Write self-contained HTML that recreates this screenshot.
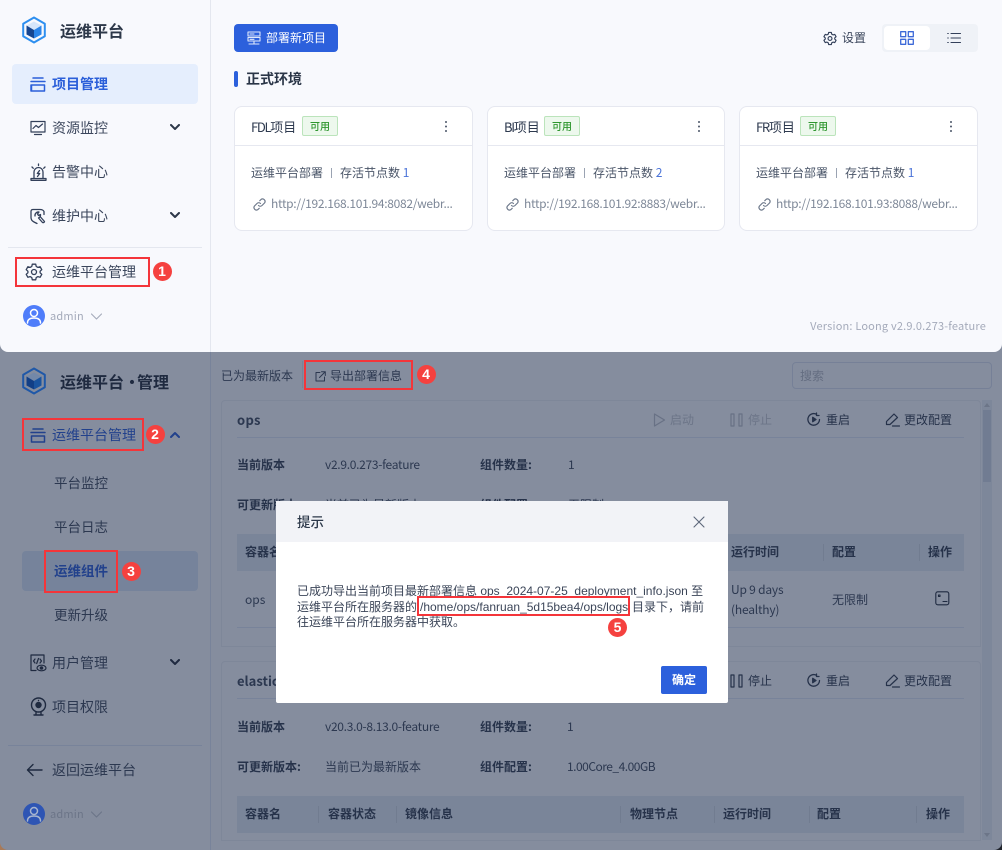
<!DOCTYPE html>
<html><head><meta charset="utf-8"><title>运维平台</title>
<style>
html,body{margin:0;padding:0;width:1002px;height:850px;overflow:hidden}
body{position:relative;background:linear-gradient(to right,#a87a58 50%,#20242c 50%);font-family:"Noto Sans CJK SC","Liberation Sans",sans-serif;font-size:12px;color:#2c3850}
.a,.t,svg{position:absolute}
.t{white-space:nowrap;line-height:20px;height:20px}
.m{font-size:14px}
.d{color:#26324a}
.g{color:#6c7588}
.b{font-weight:700}
.l{letter-spacing:-.3px}
.s{position:absolute;top:806px;width:1px;height:17px;background:#717c90}
.r{position:absolute;border:2px solid #f4353a;box-sizing:border-box;z-index:5}
.n{position:absolute;width:19px;height:19px;border-radius:50%;background:#f5413f;color:#fff;font:700 14px/19px "Liberation Sans",sans-serif;text-align:center;z-index:5}
.card{position:absolute;top:106px;height:125px;box-sizing:border-box;background:#fff;border:1px solid #e6e8f0;border-radius:8px}
.card i{position:absolute;left:0;right:0;top:38px;height:1px;background:#e6e8f0}
.tag{position:absolute;top:116px;width:36px;height:20px;box-sizing:border-box;background:#edf8ed;border:1px solid #bbe4bb;border-radius:2px;color:#2e962e;font-size:10px;font-weight:500;line-height:18px;text-align:center}
svg{fill:none;stroke-linecap:round;stroke-linejoin:round}
</style></head><body>

<div class="a" style="left:0;top:0;width:1002px;height:850px;background:#858d9e;border-radius:0 0 8px 8px"></div>

<!-- top panel -->
<div class="a" style="left:0;top:0;width:1002px;height:352px;background:#f8f9fd;border-radius:0 0 8px 8px"></div>
<div class="a" style="left:210px;top:0;width:1px;height:352px;background:#e4e7ef"></div>

<svg style="left:21px;top:15px" width="28" height="30" viewBox="0 0 28 30"><path d="M13 2.500L23.800 8.800V21.200L13 27.500 2.200 21.200V8.800z" stroke="#2d8ff0" stroke-width="2"/><path d="M13 6.500L20.500 10.500 13 15 5.500 10.500z" fill="#d5e6fb"/><path d="M5.500 10.500L13 15V23.500L5.500 19.500z" fill="#16458f"/><path d="M13 15L20.500 10.500V19.500L13 23.500z" fill="#2a84e8"/></svg>
<div class="t b" style="left:60px;top:20px;font-size:16px;color:#2d3849">运维平台</div>

<div class="a" style="left:12px;top:64px;width:186px;height:40px;background:#e5eefd;border-radius:4px"></div>
<svg style="left:30px;top:77px" width="16" height="15" viewBox="0 0 16 15" stroke="#2b5fd9" stroke-width="1.500"><path d="M3 1h10M1 4.500h14M1.500 8h13v6h-13zM1 8v6"/></svg>
<div class="t m b" style="left:52px;top:74px;color:#2b5fd9">项目管理</div>

<svg style="left:30px;top:120px" width="16" height="16" viewBox="0 0 16 16" stroke="#33405a" stroke-width="1.200"><path d="M1 1.500h14v10.500H1zM3 8.500l3-3 2.500 2 4-3.500M4.500 14.500h7"/></svg>
<div class="t m" style="left:52px;top:118px;color:#3b465c">资源监控</div>
<svg style="left:170px;top:124px" width="10" height="7" viewBox="0 0 10 7" stroke="#2d3849" stroke-width="2"><path d="M1 1l4 4 4-4"/></svg>

<svg style="left:30px;top:163px" width="17" height="18" viewBox="0 0 17 18" stroke="#33405a" stroke-width="1.300"><path d="M4 15V9a4.500 4.500 0 0 1 9 0v6M1 15.500h15v1.800H1zM8.500 1v1.500M2 4l1.300 1.300M15 4l-1.300 1.300M9.500 7.500L7.300 10.500h2.400L7.500 13.500"/></svg>
<div class="t m" style="left:52px;top:162px;color:#3b465c">告警中心</div>

<svg style="left:30px;top:208px" width="16" height="17" viewBox="0 0 16 17" stroke="#33405a" stroke-width="1.300"><path d="M7 1.500H3Q1 1.500 1 3.500v6q0 3 3 4.500l3 1.500M7 1.500h3q3 0 4 2v3M5 8a3.500 3.500 0 0 1 4-4L7.500 6l1 1.500 2-1A3.500 3.500 0 0 1 8.500 10l4 4.500q1.500.5 2-1L10.500 9"/></svg>
<div class="t m" style="left:52px;top:206px;color:#3b465c">维护中心</div>
<svg style="left:170px;top:212px" width="10" height="7" viewBox="0 0 10 7" stroke="#2d3849" stroke-width="2"><path d="M1 1l4 4 4-4"/></svg>

<div class="a" style="left:8px;top:247px;width:194px;height:1px;background:#e4e7ef"></div>
<svg style="left:25px;top:263px" width="18" height="18" viewBox="0 0 18 18" stroke="#33405a" stroke-width="1.300"><path d="M7.300 1.200h3.400l.5 2.200 1.700 1 2.200-.7 1.700 3-1.700 1.500v1.600l1.700 1.500-1.700 3-2.200-.7-1.700 1-.5 2.200H7.300l-.5-2.200-1.700-1-2.200.7-1.700-3 1.700-1.500V8.200L1.200 6.700l1.700-3 2.200.7 1.700-1z"/><circle cx="9" cy="9" r="2.500"/></svg>
<div class="t m" style="left:52px;top:262px;color:#3b465c">运维平台管理</div>
<div class="r" style="left:15px;top:257px;width:135px;height:30px"></div>
<div class="n" style="left:152.500px;top:262px">1</div>

<svg style="left:23px;top:305px" width="22" height="22" viewBox="0 0 22 22"><circle cx="11" cy="11" r="11" fill="#4f7dfa"/><circle cx="11" cy="8" r="3.500" stroke="#fff" stroke-width="1.500"/><path d="M4.500 18q0-5 6.500-5t6.500 5" stroke="#fff" stroke-width="1.500"/></svg>
<div class="t" style="left:50px;top:306px;font-size:11px;color:#a4aaba;letter-spacing:.2px">admin</div>
<svg style="left:91px;top:313px" width="11" height="7" viewBox="0 0 11 7" stroke="#a4aaba" stroke-width="1.100"><path d="M.5 1l5 5 5-5"/></svg>

<div class="a" style="left:234px;top:24px;width:104px;height:28px;background:#2c60dc;border-radius:4px"></div>
<svg style="left:247px;top:31px" width="14" height="14" viewBox="0 0 14 14" stroke="#dfe8fb" stroke-width="1.100"><path d="M1 1h12v4H1zM1 6.500h12v3.500H1zM3 3h4M3 8.300h4M7 10.500V13M2 13h10"/></svg>
<div class="t" style="left:266px;top:28px;color:#fff">部署新项目</div>

<svg style="left:823px;top:31px" width="14" height="15" viewBox="0 0 18 18" stroke="#33405a" stroke-width="1.500"><path d="M7.300 1.200h3.400l.5 2.200 1.700 1 2.200-.7 1.700 3-1.700 1.500v1.600l1.700 1.500-1.700 3-2.200-.7-1.700 1-.5 2.200H7.300l-.5-2.200-1.700-1-2.200.7-1.700-3 1.700-1.500V8.200L1.200 6.700l1.700-3 2.200.7 1.700-1z"/><circle cx="9" cy="9" r="2.500"/></svg>
<div class="t" style="left:842px;top:28px;color:#3b465c">设置</div>
<div class="a" style="left:882px;top:24px;width:96px;height:28px;background:#eff2f7;border-radius:4px"></div>
<div class="a" style="left:884px;top:26px;width:46px;height:24px;background:#fff;border-radius:4px"></div>
<svg style="left:900px;top:31px" width="14" height="14" viewBox="0 0 14 14" stroke="#3c69d8" stroke-width="1.300"><path d="M.7.700h5v5h-5zM8.300.700h5v5h-5zM.7 8.300h5v5h-5zM8.300 8.300h5v5h-5z"/></svg>
<svg style="left:947px;top:32px" width="14" height="12" viewBox="0 0 14 12" stroke="#33405a" stroke-width="1.100"><path d="M4 1.500h9.500M4 6h9.500M4 10.500h9.500M.7 1.500h.6M.7 6h.6M.7 10.500h.6"/></svg>

<div class="a" style="left:234px;top:71px;width:4px;height:16px;background:#2c60dc;border-radius:2px"></div>
<div class="t m b" style="left:246px;top:69px;color:#2a3547">正式环境</div>

<div class="card" style="left:234px;width:239px"><i></i></div>
<div class="card" style="left:487px;width:238px"><i></i></div>
<div class="card" style="left:739px;width:239px"><i></i></div>

<div class="t" style="left:251px;top:117px;font-size:13px;color:#2e3a4f"><span style="letter-spacing:-1.300px">FDL</span>项目</div>
<div class="tag" style="left:302px">可用</div>
<div class="t" style="left:504px;top:117px;font-size:13px;color:#2e3a4f"><span style="letter-spacing:-1.300px">BI</span>项目</div>
<div class="tag" style="left:544px">可用</div>
<div class="t" style="left:756px;top:117px;font-size:13px;color:#2e3a4f"><span style="letter-spacing:-1.300px">FR</span>项目</div>
<div class="tag" style="left:800px">可用</div>
<svg style="left:444px;top:120px" width="4" height="13" viewBox="0 0 4 13"><circle cx="2" cy="2" r="1" fill="#4a5568"/><circle cx="2" cy="6.500" r="1" fill="#4a5568"/><circle cx="2" cy="11" r="1" fill="#4a5568"/></svg>
<svg style="left:697px;top:120px" width="4" height="13" viewBox="0 0 4 13"><circle cx="2" cy="2" r="1" fill="#4a5568"/><circle cx="2" cy="6.500" r="1" fill="#4a5568"/><circle cx="2" cy="11" r="1" fill="#4a5568"/></svg>
<svg style="left:949px;top:120px" width="4" height="13" viewBox="0 0 4 13"><circle cx="2" cy="2" r="1" fill="#4a5568"/><circle cx="2" cy="6.500" r="1" fill="#4a5568"/><circle cx="2" cy="11" r="1" fill="#4a5568"/></svg>

<div class="t" style="left:251px;top:163px;color:#4a5568">运维平台部署</div><div class="a" style="left:331px;top:168px;width:1px;height:10px;background:#9aa3b2"></div><div class="t" style="left:340px;top:163px;color:#4a5568">存活节点数 <span style="color:#4a73d8">1</span></div>
<div class="t" style="left:504px;top:163px;color:#4a5568">运维平台部署</div><div class="a" style="left:584px;top:168px;width:1px;height:10px;background:#9aa3b2"></div><div class="t" style="left:593px;top:163px;color:#4a5568">存活节点数 <span style="color:#4a73d8">2</span></div>
<div class="t" style="left:756px;top:163px;color:#4a5568">运维平台部署</div><div class="a" style="left:836px;top:168px;width:1px;height:10px;background:#9aa3b2"></div><div class="t" style="left:845px;top:163px;color:#4a5568">存活节点数 <span style="color:#4a73d8">1</span></div>

<svg style="left:253px;top:198px" width="13" height="13" viewBox="0 0 13 13" stroke="#6f7a8c" stroke-width="1.200"><path d="M5.500 7.500a2.500 2.500 0 0 0 3.500 0l2.500-2.500A2.500 2.500 0 0 0 8 1.500L6.800 2.700M7.500 5.500a2.500 2.500 0 0 0-3.500 0L1.500 8A2.500 2.500 0 0 0 5 11.500l1.200-1.200"/></svg>
<div class="t l" style="left:271px;top:194px;color:#7e8898">http://192.168.101.94:8082/webr...</div>
<svg style="left:506px;top:198px" width="13" height="13" viewBox="0 0 13 13" stroke="#6f7a8c" stroke-width="1.200"><path d="M5.500 7.500a2.500 2.500 0 0 0 3.500 0l2.500-2.500A2.500 2.500 0 0 0 8 1.500L6.800 2.700M7.500 5.500a2.500 2.500 0 0 0-3.500 0L1.500 8A2.500 2.500 0 0 0 5 11.500l1.200-1.200"/></svg>
<div class="t l" style="left:524px;top:194px;color:#7e8898">http://192.168.101.92:8883/webr...</div>
<svg style="left:758px;top:198px" width="13" height="13" viewBox="0 0 13 13" stroke="#6f7a8c" stroke-width="1.200"><path d="M5.500 7.500a2.500 2.500 0 0 0 3.500 0l2.500-2.500A2.500 2.500 0 0 0 8 1.500L6.800 2.700M7.500 5.500a2.500 2.500 0 0 0-3.500 0L1.500 8A2.500 2.500 0 0 0 5 11.500l1.200-1.200"/></svg>
<div class="t l" style="left:776px;top:194px;color:#7e8898">http://192.168.101.93:8088/webr...</div>

<div class="t" style="right:16px;top:316px;font-size:11px;color:#a4aaba;letter-spacing:.18px">Version: Loong v2.9.0.273-feature</div>

<!-- lower dimmed panel -->
<div class="a" style="left:210px;top:352px;width:1px;height:498px;background:#78839a"></div>
<svg style="left:21px;top:366px" width="28" height="30" viewBox="0 0 28 30"><path d="M13 2.500L23.800 8.800V21.200L13 27.500 2.200 21.200V8.800z" stroke="#1f58a8" stroke-width="2"/><path d="M13 6.500L20.500 10.500 13 15 5.500 10.500z" fill="#7388a8"/><path d="M5.500 10.500L13 15V23.500L5.500 19.500z" fill="#123f86"/><path d="M13 15L20.500 10.500V19.500L13 23.500z" fill="#1a549f"/></svg>
<div class="t b" style="left:60px;top:371px;font-size:16px;color:#1f2a40">运维平台</div>
<div class="t b" style="left:124px;top:371px;font-size:16px;color:#1f2a40">·</div>
<div class="t b" style="left:137px;top:371px;font-size:16px;color:#1f2a40">管理</div>

<svg style="left:30px;top:428px" width="16" height="15" viewBox="0 0 16 15" stroke="#22418c" stroke-width="1.500"><path d="M3 1h10M1 4.500h14M1.500 8h13v6h-13z"/></svg>
<div class="t m" style="left:52px;top:425px;color:#22418c">运维平台管理</div>
<div class="r" style="left:22px;top:418px;width:122px;height:33px"></div>
<div class="n" style="left:145.500px;top:425px">2</div>
<svg style="left:170px;top:431px" width="10" height="7" viewBox="0 0 10 7" stroke="#22418c" stroke-width="2"><path d="M1 6l4-4 4 4"/></svg>

<div class="t m" style="left:54px;top:472px;font-size:13.500px;color:#2c3850">平台监控</div>
<div class="t m" style="left:54px;top:516px;font-size:13.500px;color:#2c3850">平台日志</div>
<div class="a" style="left:22px;top:551px;width:176px;height:40px;background:#76839b;border-radius:4px"></div>
<div class="t m b" style="left:54px;top:560px;font-size:13.500px;color:#22418c">运维组件</div>
<div class="r" style="left:44px;top:550px;width:74px;height:43px"></div>
<div class="n" style="left:121.500px;top:562px">3</div>
<div class="t m" style="left:54px;top:604px;font-size:13.500px;color:#2c3850">更新升级</div>

<svg style="left:30px;top:654px" width="17" height="18" viewBox="0 0 17 18" stroke="#1f2a40" stroke-width="1.200"><path d="M6 16.500H1V1h13v8M5 5L3.500 7 5 9M10 5l1.500 2L10 9M8.500 4.500L6.700 9.500"/><ellipse cx="11.500" cy="14" rx="4.500" ry="2.800"/><circle cx="11.500" cy="14" r="1.200" fill="#1f2a40"/></svg>
<div class="t m" style="left:52px;top:653px;color:#2c3850">用户管理</div>
<svg style="left:170px;top:659px" width="10" height="7" viewBox="0 0 10 7" stroke="#1f2a40" stroke-width="2"><path d="M1 1l4 4 4-4"/></svg>

<svg style="left:30px;top:697px" width="17" height="20" viewBox="0 0 17 20" stroke="#1f2a40" stroke-width="1.400"><circle cx="8.500" cy="8" r="7"/><circle cx="8.500" cy="8" r="2.500" fill="#1f2a40"/><path d="M8.500 3.500h.01M4 18h9M6 15.500V18M11 15.500V18"/></svg>
<div class="t m" style="left:52px;top:697px;color:#2c3850">项目权限</div>

<div class="a" style="left:8px;top:745px;width:194px;height:1px;background:#78839a"></div>
<svg style="left:26px;top:763px" width="17" height="14" viewBox="0 0 17 14" stroke="#1f2a40" stroke-width="1.400"><path d="M16 7H1.500M7 1.500L1.500 7 7 12.500"/></svg>
<div class="t m" style="left:52px;top:760px;color:#2c3850">返回运维平台</div>

<svg style="left:23px;top:803px" width="22" height="22" viewBox="0 0 22 22"><circle cx="11" cy="11" r="11" fill="#2e55b4"/><circle cx="11" cy="8" r="3.500" stroke="#a6b4cf" stroke-width="1.500"/><path d="M4.500 18q0-5 6.500-5t6.500 5" stroke="#a6b4cf" stroke-width="1.500"/></svg>
<div class="t g" style="left:50px;top:804px;font-size:11px;letter-spacing:.2px">admin</div>
<svg style="left:91px;top:811px" width="11" height="7" viewBox="0 0 11 7" stroke="#6c7588" stroke-width="1.100"><path d="M.5 1l5 5 5-5"/></svg>

<div class="t" style="left:221px;top:366px;color:#2c3850">已为最新版本</div>
<div class="a" style="left:302px;top:361px;width:1px;height:27px;background:#78839a"></div>
<svg style="left:315px;top:371px" width="11" height="11" viewBox="0 0 11 11" stroke="#2c3850" stroke-width="1"><path d="M5 1.500H1v8.500h8.500V6M4.500 6.500L10 1M6.500.7H10.300V4.500"/></svg>
<div class="t" style="left:330px;top:366px;color:#2c3850">导出部署信息</div>
<div class="r" style="left:304px;top:360px;width:109px;height:30px"></div>
<div class="n" style="left:416.500px;top:365px">4</div>
<div class="a" style="left:792px;top:362px;width:200px;height:27px;box-sizing:border-box;border:1px solid #768097;border-radius:4px"></div>
<div class="t" style="left:800px;top:366px;color:#646d81">搜索</div>

<!-- card 1 -->
<div class="a" style="left:221px;top:400px;width:760px;height:247px;box-sizing:border-box;border:1px solid #7e8799;border-radius:4px 4px 0 0"></div>
<div class="t b" style="left:237px;top:410px;font-size:13px;letter-spacing:.3px;color:#2c3850">ops</div>
<div class="a" style="left:237px;top:437px;width:727px;height:1px;background:#78839a"></div>
<svg style="left:653px;top:413px" width="13" height="14" viewBox="0 0 13 14" stroke="#687185" stroke-width="1.200"><path d="M1.500 1v12L11.500 7z"/></svg>
<div class="t g" style="left:670px;top:410px">启动</div>
<svg style="left:730px;top:413px" width="13" height="14" viewBox="0 0 13 14" stroke="#687185" stroke-width="1.200"><path d="M1 1h3v12H1zM9 1h3v12H9z"/></svg>
<div class="t g" style="left:748px;top:410px">停止</div>
<svg style="left:807px;top:412px" width="14" height="15" viewBox="0 0 14 15" stroke="#26324a" stroke-width="1.300"><path d="M12.500 7.500a5.800 5.800 0 1 1-3-5.200M9.500 1v2.500H12"/><path d="M5.700 5.300v4.400L9 7.500z" fill="#26324a"/></svg>
<div class="t d" style="left:826px;top:410px">重启</div>
<svg style="left:885px;top:412px" width="15" height="15" viewBox="0 0 15 15" stroke="#26324a" stroke-width="1.200"><path d="M1.500 12.500V9.500L9 2l3.500 3.500L5 12.500zM7.500 14h7"/></svg>
<div class="t d" style="left:904px;top:410px">更改配置</div>

<div class="t b" style="left:237px;top:455px;color:#26324a">当前版本</div>
<div class="t l" style="left:325px;top:455px;color:#2c3850">v2.9.0.273-feature</div>
<div class="t b" style="left:480px;top:455px;color:#26324a">组件数量:</div>
<div class="t" style="left:568px;top:455px;color:#2c3850">1</div>
<div class="t b" style="left:237px;top:495px;color:#26324a">可更新版本:</div>
<div class="t" style="left:325px;top:495px;color:#2c3850">当前已为最新版本</div>
<div class="t b" style="left:480px;top:495px;color:#26324a">组件配置:</div>
<div class="t" style="left:568px;top:495px;color:#2c3850">无限制</div>

<div class="a" style="left:237px;top:534px;width:727px;height:37px;background:#7a8599"></div>
<div class="t b" style="left:245px;top:542px;color:#26324a">容器名</div>
<div class="t b" style="left:731px;top:542px;color:#26324a">运行时间</div>
<div class="t b" style="left:832px;top:542px;color:#26324a">配置</div>
<div class="t b" style="left:928px;top:542px;color:#26324a">操作</div>
<div class="a" style="left:823px;top:544px;width:1px;height:17px;background:#717c90"></div>
<div class="a" style="left:919px;top:544px;width:1px;height:17px;background:#717c90"></div>
<div class="t" style="left:245px;top:590px;color:#2c3850">ops</div>
<div class="t" style="left:731px;top:580px;color:#2c3850;letter-spacing:-.2px">Up 9 days</div>
<div class="t" style="left:731px;top:600px;color:#2c3850;letter-spacing:-.2px">(healthy)</div>
<div class="t" style="left:832px;top:590px;color:#2c3850">无限制</div>
<svg style="left:935px;top:591px" width="15" height="15" viewBox="0 0 15 15" stroke="#1f2a40" stroke-width="1.100"><rect x=".8" y=".8" width="13" height="13" rx="2"/><path d="M8 10.500h4M3.500 4h1.500v1.500h-1.500z"/></svg>
<div class="a" style="left:237px;top:627px;width:727px;height:1px;background:#78839a"></div>

<!-- card 2 -->
<div class="a" style="left:221px;top:661px;width:760px;height:180px;box-sizing:border-box;border:1px solid #7e8799;border-top-left-radius:4px;border-top-right-radius:4px"></div>
<div class="t b" style="left:237px;top:671px;font-size:13px;color:#2c3850">elastic</div>
<svg style="left:730px;top:674px" width="13" height="14" viewBox="0 0 13 14" stroke="#26324a" stroke-width="1.200"><path d="M1 1h3v12H1zM9 1h3v12H9z"/></svg>
<div class="t d" style="left:748px;top:671px">停止</div>
<svg style="left:807px;top:673px" width="14" height="15" viewBox="0 0 14 15" stroke="#26324a" stroke-width="1.300"><path d="M12.500 7.500a5.800 5.800 0 1 1-3-5.200M9.500 1v2.500H12"/><path d="M5.700 5.300v4.400L9 7.500z" fill="#26324a"/></svg>
<div class="t d" style="left:826px;top:671px">重启</div>
<svg style="left:885px;top:673px" width="15" height="15" viewBox="0 0 15 15" stroke="#26324a" stroke-width="1.200"><path d="M1.500 12.500V9.500L9 2l3.500 3.500L5 12.500zM7.500 14h7"/></svg>
<div class="t d" style="left:904px;top:671px">更改配置</div>
<div class="a" style="left:237px;top:698px;width:727px;height:1px;background:#78839a"></div>

<div class="t b" style="left:237px;top:717px;color:#26324a">当前版本</div>
<div class="t l" style="left:325px;top:717px;color:#2c3850">v20.3.0-8.13.0-feature</div>
<div class="t b" style="left:480px;top:717px;color:#26324a">组件数量:</div>
<div class="t" style="left:567px;top:717px;color:#2c3850">1</div>
<div class="t b" style="left:237px;top:757px;color:#26324a">可更新版本:</div>
<div class="t" style="left:325px;top:757px;color:#2c3850">当前已为最新版本</div>
<div class="t b" style="left:480px;top:757px;color:#26324a">组件配置:</div>
<div class="t" style="left:567px;top:757px;color:#2c3850;letter-spacing:-.5px">1.00Core_4.00GB</div>

<div class="a" style="left:237px;top:796px;width:727px;height:37px;background:#7a8599"></div>
<div class="t b" style="left:245px;top:804px;color:#26324a">容器名</div>
<div class="t b" style="left:328px;top:804px;color:#26324a">容器状态</div>
<div class="t b" style="left:405px;top:804px;color:#26324a">镜像信息</div>
<div class="t b" style="left:630px;top:804px;color:#26324a">物理节点</div>
<div class="t b" style="left:723px;top:804px;color:#26324a">运行时间</div>
<div class="t b" style="left:817px;top:804px;color:#26324a">配置</div>
<div class="t b" style="left:926px;top:804px;color:#26324a">操作</div>
<div class="s" style="left:318px"></div>
<div class="s" style="left:396px"></div>
<div class="s" style="left:620px"></div>
<div class="s" style="left:714px"></div>
<div class="s" style="left:809px"></div>
<div class="s" style="left:916px"></div>

<!-- scrollbar -->
<div class="a" style="left:982px;top:400px;width:10px;height:440px;background:#7d879a"></div>
<div class="a" style="left:983px;top:410px;width:8px;height:72px;background:#717c92"></div>
<svg style="left:984px;top:403px" width="6" height="4" viewBox="0 0 6 4"><path d="M0 4L3 0l3 4z" fill="#6c7588"/></svg>
<svg style="left:984px;top:833px" width="6" height="4" viewBox="0 0 6 4"><path d="M0 0L3 4l3-4z" fill="#6c7588"/></svg>

<!-- modal -->
<div class="a" style="left:276px;top:501px;width:452px;height:202px;background:#fff;border-radius:2px;z-index:3"></div>
<div class="a" style="left:276px;top:501px;width:452px;height:41px;background:#f2f3f7;z-index:3"></div>
<div class="t m" style="left:297px;top:511px;font-size:13.500px;font-weight:500;color:#2c3849;z-index:4">提示</div>
<svg style="left:693px;top:516px;z-index:4" width="12" height="12" viewBox="0 0 12 12" stroke="#5c6679" stroke-width="1.100"><path d="M1 1l10 10M11 1L1 11"/></svg>
<div class="t" style="left:297px;top:581px;font-family:'Liberation Sans','Noto Sans CJK SC',sans-serif;font-size:12px;color:#3b4558;z-index:4">已成功导出当前项目最新部署信息 ops_2024-07-25_deployment_info.json 至</div>
<div class="t" style="left:297px;top:597px;font-family:'Liberation Sans','Noto Sans CJK SC',sans-serif;font-size:12px;color:#3b4558;z-index:4">运维平台所在服务器的</div>
<div class="t" style="left:420px;top:597px;font-family:'Liberation Sans','Noto Sans CJK SC',sans-serif;font-size:12px;color:#3b4558;z-index:4">/home/ops/fanruan_5d15bea4/ops/logs</div>
<div class="t" style="left:632px;top:597px;font-family:'Liberation Sans','Noto Sans CJK SC',sans-serif;font-size:12px;color:#3b4558;z-index:4">目录下，请前</div>
<div class="t" style="left:297px;top:612px;font-family:'Liberation Sans','Noto Sans CJK SC',sans-serif;font-size:12px;color:#3b4558;z-index:4">往运维平台所在服务器中获取。</div>
<div class="r" style="left:417px;top:596px;width:213px;height:20px"></div>
<div class="n" style="left:608px;top:618px">5</div>
<div class="a" style="left:661px;top:666px;width:46px;height:28px;background:#2c60dc;border-radius:2px;z-index:4;color:#fff;font-size:12px;font-weight:700;line-height:28px;text-align:center">确定</div>

</body></html>
